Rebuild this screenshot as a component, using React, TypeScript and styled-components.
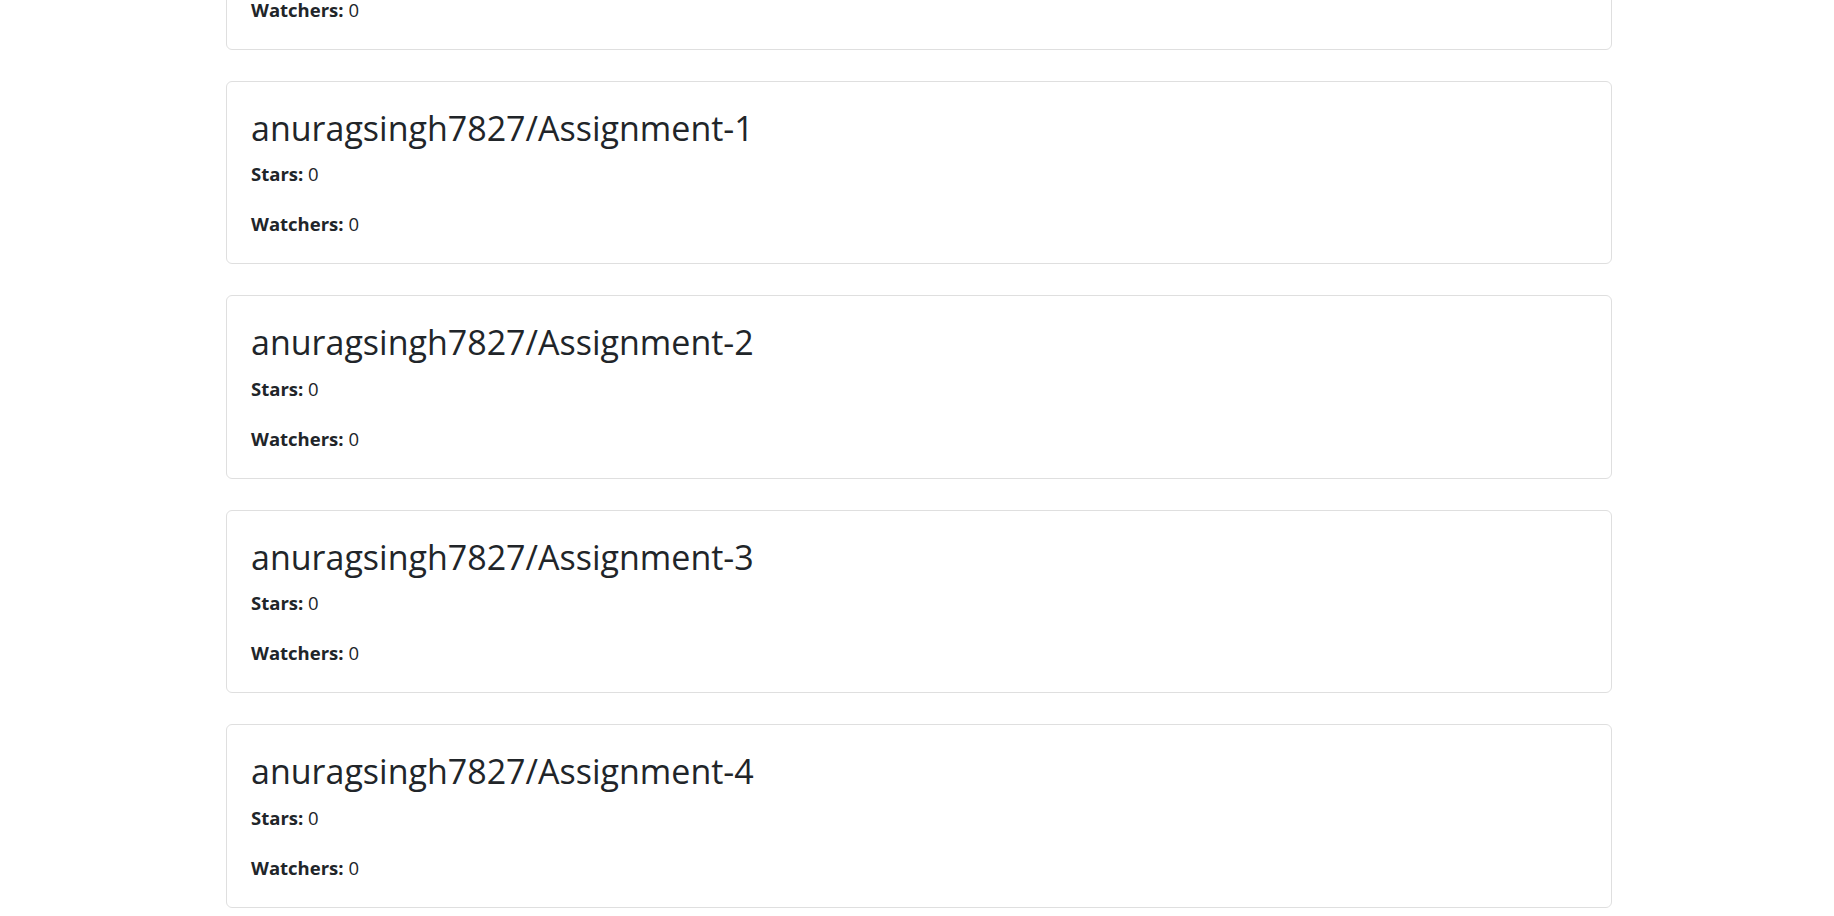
import React from 'react'
import styled, { createGlobalStyle } from 'styled-components'

const GlobalStyle = createGlobalStyle`
  html, body {
    margin: 0;
    padding: 0;
    background: #fff;
  }

  body {
    color: #212529;
    font-family: 'Open Sans', 'Noto Sans', sans-serif;
  }
`

const RepoList = styled.div`
  display: flex;
  flex-direction: column;
  gap: 31px;
  margin: -134px 0 0 226px;
  width: 1386px;
`

const RepoCard = styled.div`
  background: #fff;
  border: 1px solid #dfdfdf;
  border-radius: 6px;
  box-sizing: border-box;
  padding: 26px 24px 24px;
`

const RepoName = styled.h3`
  font-size: 34px;
  font-weight: 500;
  line-height: 41px;
  margin: 0 0 10.5px;
`

const Stat = styled.p`
  font-size: 18.5px;
  line-height: 30px;
  margin: 0 0 20px;

  &:last-child {
    margin-bottom: 0;
  }
`

const StatLabel = styled.strong`
  font-weight: 700;
`

interface Repo {
  fullName: string
  stars: number
  watchers: number
}

const repos: Repo[] = [
  { fullName: 'anuragsingh7827/anuragsingh7827', stars: 0, watchers: 0 },
  { fullName: 'anuragsingh7827/Assignment-1', stars: 0, watchers: 0 },
  { fullName: 'anuragsingh7827/Assignment-2', stars: 0, watchers: 0 },
  { fullName: 'anuragsingh7827/Assignment-3', stars: 0, watchers: 0 },
  { fullName: 'anuragsingh7827/Assignment-4', stars: 0, watchers: 0 },
]

const App = () => {
  return (
    <>
      <GlobalStyle />
      <RepoList>
        {repos.map(repo => (
          <RepoCard key={repo.fullName}>
            <RepoName>{repo.fullName}</RepoName>
            <Stat>
              <StatLabel>Stars:</StatLabel> {repo.stars}
            </Stat>
            <Stat>
              <StatLabel>Watchers:</StatLabel> {repo.watchers}
            </Stat>
          </RepoCard>
        ))}
      </RepoList>
    </>
  )
}

export default App
